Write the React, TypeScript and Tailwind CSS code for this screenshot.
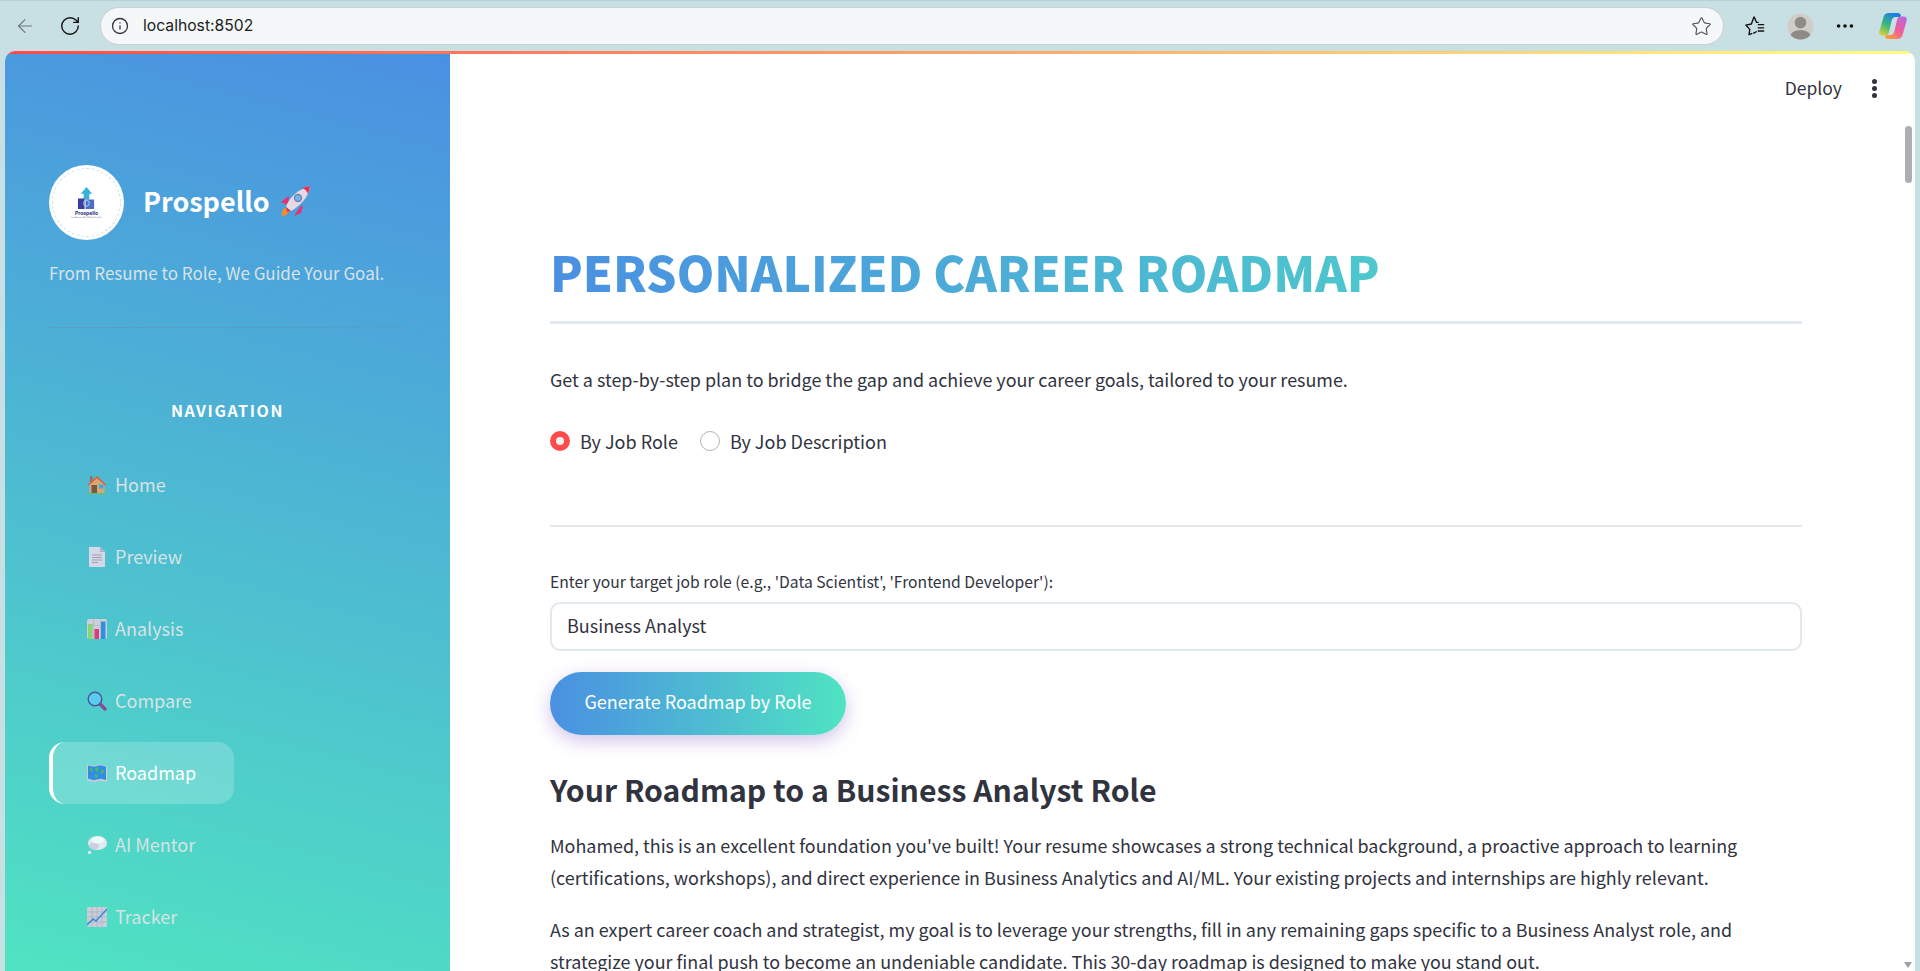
import { ArrowLeft, RotateCw, Info, Star, MoreHorizontal } from "lucide-react"

const sourceFont = "font-['Noto_Sans_CJK_SC','Noto_Sans',sans-serif]"

function Rocket() {
    return (
        <svg viewBox="0 0 32 32" className="w-8 h-8">
            <path d="M3 31c-1-4 1-8 4-8s4 2 3 4-4 4-7 4z" fill="#f78c2a" />
            <path d="M10 11L2 17l7 3zM21 22l-6 9 7-3 2-8z" fill="#ee2d6c" />
            <path d="M7 22C10 12 20 4 31 1c-1 11-10 20-19 25z" fill="#e6d8e4" />
            <path d="M23 3c3 1 5 3 6 6l2-8z" fill="#f0274f" />
            <circle cx="19" cy="13" r="4.200" fill="#7c7fb0" />
            <circle cx="19" cy="13" r="2.800" fill="#6fb6ef" />
            <path d="M7 22l5 4-4 1z" fill="#d9336a" />
        </svg>
    )
}

function HomeIcon() {
    return (
        <svg viewBox="0 0 20 20" className="w-5 h-5">
            <rect x="3" y="1" width="2.500" height="6" fill="#a0694a" />
            <path d="M2.500 8.500L10 2.500l7.500 6V18h-15z" fill="#e7a56c" />
            <path d="M0.500 10L10 1l9.500 9-1 .8L10 3.200 1.500 10.800z" fill="#e8552e" />
            <rect x="4.500" y="10" width="5.500" height="8" fill="#7a4f3a" />
            <rect x="12" y="9.500" width="4.500" height="4" fill="#3fa7e6" />
            <rect x="0.500" y="18" width="19" height="1.300" fill="#5fc46a" />
        </svg>
    )
}

function DocIcon() {
    return (
        <svg viewBox="0 0 20 20" className="w-5 h-5">
            <path d="M2 0h11l5 5v15H2z" fill="#e4dcea" />
            <path d="M13 0l5 5h-5z" fill="#b9afc6" />
            <path d="M5 8h10M5 10.500h10M5 13h10M5 15.500h6" stroke="#a79db5" strokeWidth="1" />
        </svg>
    )
}

function ChartIcon() {
    return (
        <svg viewBox="0 0 20 20" className="w-5 h-5">
            <rect width="20" height="20" rx="2" fill="#d9d3de" />
            <path d="M6.500 0v20M13.500 0v20M0 6.500h20" stroke="#bdb6c6" strokeWidth="0.800" />
            <rect x="1" y="5" width="4.500" height="15" fill="#8fd96a" />
            <rect x="7.500" y="10" width="4.500" height="10" fill="#ec2f72" />
            <rect x="14" y="2.500" width="4.500" height="17.500" fill="#2b8be0" />
        </svg>
    )
}

function SearchIcon() {
    return (
        <svg viewBox="0 0 20 20" className="w-5 h-5">
            <path d="M13 13l5 5" stroke="#8b3f88" strokeWidth="3.400" strokeLinecap="round" />
            <circle cx="8" cy="8" r="6.800" fill="#5dcdee" stroke="#4a4a9c" strokeWidth="1.400" />
        </svg>
    )
}

function MapIcon() {
    return (
        <svg viewBox="0 0 20 20" className="w-5 h-5">
            <path d="M0 1.500l6.500 1.500 7-1.500 6.500 1.500v16l-6.500-1.500-7 1.500L0 17z" fill="#d3c7dc" />
            <path d="M1 2.500l5.500 1.300 7-1.500L19 3.500v13.500l-5.500-1.300-7 1.500L1 15.500z" fill="#2f8fe3" />
            <path d="M3 5l3 1-1 3-2-1zM8 5l3-1 1 3-3 2zM14 6l3 1-1 4-2-1zM8 11l3 1-1 3-2-1z" fill="#4fb56a" />
        </svg>
    )
}

function ThoughtIcon() {
    return (
        <svg viewBox="0 0 20 20" className="w-5 h-5">
            <ellipse cx="10.500" cy="8" rx="9.500" ry="7" fill="#f1ecf5" />
            <ellipse cx="7" cy="11" rx="5" ry="3.500" fill="#d9d0e4" />
            <ellipse cx="11" cy="5" rx="6" ry="3.500" fill="#ffffff" />
            <circle cx="2.500" cy="17.500" r="1.700" fill="#f1ecf5" />
        </svg>
    )
}

function TrackerIcon() {
    return (
        <svg viewBox="0 0 20 20" className="w-5 h-5">
            <rect width="20" height="20" rx="1.500" fill="#d8cddd" />
            <path d="M5 0v20M10 0v20M15 0v20M0 5h20M0 10h20M0 15h20" stroke="#b8a9c0" strokeWidth="0.700" />
            <path d="M0 18l6-6 3 2 11-12" fill="none" stroke="#3b86d8" strokeWidth="1.600" />
        </svg>
    )
}

function StarList() {
    return (
        <svg viewBox="0 0 24 24" className="w-[22px] h-[22px]" fill="none" stroke="#111" strokeWidth="1.500">
            <path d="M11 2l2.600 6h2.400M9 20l-3.500 1.500.8-5.800L2 11l6-1.200L11 2M10 20l4-2" strokeLinejoin="round" />
            <path d="M15 10.500h7M15 14h7M15 17.500h7" />
        </svg>
    )
}

function Profile() {
    return (
        <svg viewBox="0 0 28 28" className="w-[27px] h-[27px]">
            <defs>
                <clipPath id="avatar"><circle cx="14" cy="14" r="13.500" /></clipPath>
            </defs>
            <circle cx="14" cy="14" r="13.500" fill="#cfcdca" />
            <g clipPath="url(#avatar)" fill="#8e8b87">
                <circle cx="14" cy="10" r="6" />
                <ellipse cx="14" cy="25" rx="11" ry="7.500" />
            </g>
        </svg>
    )
}

function Copilot() {
    return (
        <svg viewBox="0 0 28 28" className="w-7 h-7">
            <defs>
                <linearGradient id="copLeft" x1="0" y1="1" x2="0.600" y2="0">
                    <stop offset="0" stopColor="#f6d32d" />
                    <stop offset="0.500" stopColor="#39b97c" />
                    <stop offset="1" stopColor="#1c7fe0" />
                </linearGradient>
                <linearGradient id="copRight" x1="1" y1="0" x2="0.300" y2="1">
                    <stop offset="0" stopColor="#b469e8" />
                    <stop offset="0.600" stopColor="#f25c9a" />
                    <stop offset="1" stopColor="#f99a3f" />
                </linearGradient>
            </defs>
            <path d="M10 1h9c1.500 0 2.500 1 3 2.500l-1 1.500h-4c-3 0-4 2-4.500 4L10 20c-.5 2-2 3.500-4 3.500H3c-2 0-3.200-2-2.700-4L4.500 5C5.200 2.500 7 1 10 1z" fill="url(#copLeft)" />
            <path d="M18 27H9c-1.500 0-2.500-1-3-2.500l1-1.500h4c3 0 4-2 4.500-4L18 8c.5-2 2-3.500 4-3.500h3c2 0 3.200 2 2.700 4L23.500 23c-.7 2.500-2.500 4-5.500 4z" fill="url(#copRight)" />
        </svg>
    )
}

function LogoBadge() {
    return (
        <div className="w-[75px] h-[75px] rounded-full bg-white flex items-center justify-center shrink-0">
            <div className="w-[69px] h-[69px] rounded-full border border-dashed border-[#c4dff0] flex flex-col items-center justify-center">
                <svg viewBox="0 0 20 24" className="w-[19px] h-[23px]">
                    <path d="M10 0l6 7h-3v6H7V7H4z" fill="#37b3d8" />
                    <path d="M1 12h7v11H1z" fill="#3a3f9e" />
                    <path d="M9 13h9v10H9z" fill="#4c6fc4" />
                    <circle cx="10" cy="17" r="3" fill="none" stroke="#bcd6f0" strokeWidth="1" />
                </svg>
                <span className="text-[5px] leading-[7px] font-bold text-[#2a2f80] font-['Inter',sans-serif]">Prospello</span>
                <span className="text-[1.500px] leading-[2px] text-[#666] whitespace-nowrap font-['Inter',sans-serif]">From Resume to Role, We Guide Your Goal</span>
            </div>
        </div>
    )
}

const navItems = [
    { label: "Home", icon: HomeIcon },
    { label: "Preview", icon: DocIcon },
    { label: "Analysis", icon: ChartIcon },
    { label: "Compare", icon: SearchIcon },
    { label: "Roadmap", icon: MapIcon, active: true },
    { label: "AI Mentor", icon: ThoughtIcon },
    { label: "Tracker", icon: TrackerIcon },
]

function Sidebar() {
    return (
        <aside className="w-[445px] shrink-0 h-full overflow-hidden bg-[linear-gradient(195deg,#4a90e2_0%,#50e3c2_100%)] px-11 pt-[111px]">
            <div className="flex items-center h-[75px]">
                <LogoBadge />
                <span className="ml-[19px] pb-[4px] text-[27px] leading-none font-bold text-white">Prospello</span>
                <div className="ml-[9px] -mt-[3px]"><Rocket /></div>
            </div>
            <p className="mt-[19px] text-[17px] leading-[28px] text-[#d8e2e8] whitespace-nowrap">From Resume to Role, We Guide Your Goal.</p>
            <div className="mt-[40px] h-px bg-[#5b9fc0] w-[357px]" />
            <h3 className="mt-[70px] text-center text-[16px] leading-6 font-semibold tracking-[1.600px] text-white">NAVIGATION</h3>
            <nav className="mt-[32px] flex flex-col gap-[10px]">
                {navItems.map((item) => {
                    const Icon = item.icon
                    return (
                        <div
                            key={item.label}
                            className={
                                item.active
                                    ? "w-[185px] h-[62px] flex items-center gap-2 pl-[34px] rounded-2xl border-l-4 border-white bg-white/20 text-white text-[18px]"
                                    : "w-[185px] h-[62px] flex items-center gap-2 pl-[38px] text-[#d8e2e4] text-[18px]"
                            }
                        >
                            <span className={item.active ? "" : "opacity-90"}><Icon /></span>
                            <span className="pb-[2px]">{item.label}</span>
                        </div>
                    )
                })}
            </nav>
        </aside>
    )
}

function MainContent() {
    return (
        <main className="relative flex-1 h-full overflow-hidden bg-white pl-[100px] pr-[113px] text-[#31333f]">
            <header className="flex justify-end items-center h-[68px] -mr-[76px] gap-[30px]">
                <span className="text-[17.500px]">Deploy</span>
                <span className="flex flex-col gap-[2px] mr-[1px]">
                    <i className="block w-[5px] h-[5px] rounded-full bg-[#31333f]" />
                    <i className="block w-[5px] h-[5px] rounded-full bg-[#31333f]" />
                    <i className="block w-[5px] h-[5px] rounded-full bg-[#31333f]" />
                </span>
            </header>

            <h1 className="mt-[114px] pb-[15px] border-b-[3px] border-[#e2e8f0] text-[47.850px] leading-[70px] font-extrabold">
                <span className="block bg-[linear-gradient(90deg,#4a90e2,#50e3c2)] bg-clip-text text-transparent">PERSONALIZED CAREER ROADMAP</span>
            </h1>
            <p className="mt-[40px] text-[17.930px] leading-[30px]">Get a step-by-step plan to bridge the gap and achieve your career goals, tailored to your resume.</p>

            <div className="mt-[32px] flex items-center text-[18px] leading-[30px]">
                <span className="w-5 h-5 rounded-full border-[6px] border-[#ff4b4b] bg-[#f0f2f6]" />
                <span className="ml-[10px]">By Job Role</span>
                <span className="ml-[22px] w-5 h-5 rounded-full border border-[#b4b4b4] bg-white" />
                <span className="ml-[10px]">By Job Description</span>
            </div>

            <div className="mt-[69px] h-[2px] bg-[#e6e8ec]" />

            <label className="block mt-[43px] text-[15.680px] leading-[24px]">Enter your target job role (e.g., 'Data Scientist', 'Frontend Developer'):</label>
            <div className="mt-[8px] h-[49px] rounded-[10px] border-2 border-[#e2e8f0] bg-white flex items-center pl-[15px] pb-[2px] text-[18px]">Business Analyst</div>

            <button type="button" className="block mt-[21px] h-[63px] w-[296px] pb-[4px] rounded-full bg-[linear-gradient(90deg,#4a90e2,#50e3c2)] text-white text-[18px] shadow-[0_6px_18px_rgba(126,87,194,0.35)]">
                Generate Roadmap by Role
            </button>

            <h2 className="mt-[30px] text-[30.200px] leading-[48px] font-semibold">Your Roadmap to a Business Analyst Role</h2>

            <p className="mt-[16px] text-[17.930px] leading-[32px]">
                Mohamed, this is an excellent foundation you've built! Your resume showcases a strong technical background, a proactive approach to learning (certifications, workshops), and direct experience in Business Analytics and AI/ML. Your existing projects and internships are highly relevant.
            </p>
            <p className="mt-[20px] text-[17.930px] leading-[32px]">
                As an expert career coach and strategist, my goal is to leverage your strengths, fill in any remaining gaps specific to a Business Analyst role, and strategize your final push to become an undeniable candidate. This 30-day roadmap is designed to make you stand out.
            </p>

            {/* page scrollbar */}
            <div className="absolute right-[3px] top-[72px] w-[7px] h-[57px] rounded-full bg-[#aeaeb2]" />
            <div className="absolute right-[3px] bottom-[3px] w-0 h-0 border-x-[4px] border-x-transparent border-t-[6px] border-t-[#a0a0a4]" />
        </main>
    )
}

export default function App() {
    return (
        <div className={`h-screen overflow-hidden flex flex-col bg-[#c8dfe3] ${sourceFont}`}>
            <div className="h-[51px] shrink-0 flex items-center border-t border-[#b3d3d8] font-['Inter',sans-serif]">
                <ArrowLeft className="ml-[14px] w-[22px] h-[22px] text-[#6f7a7d]" strokeWidth={1.300} />
                <RotateCw className="ml-[23px] w-[22px] h-[22px] text-[#111]" strokeWidth={1.500} />
                <div className="ml-[19px] w-[1624px] h-[38px] rounded-full bg-[#f4f8f9] border border-[#c9d2d5] flex items-center pl-[10px] pr-[11px]">
                    <Info className="w-[18px] h-[18px] text-[#333]" strokeWidth={1.700} />
                    <span className="ml-[14px] text-[15.700px] text-[#1c1c1c]">localhost:8502</span>
                    <Star className="ml-auto w-[21px] h-[21px] text-[#555]" strokeWidth={1.300} />
                </div>
                <div className="ml-[20px]"><StarList /></div>
                <div className="ml-[21px]"><Profile /></div>
                <MoreHorizontal className="ml-[20px] w-[22px] h-[22px] text-[#111]" strokeWidth={2} />
                <div className="ml-[23px]"><Copilot /></div>
            </div>

            <div className="mx-[5px] flex-1 min-h-0 rounded-t-[10px] overflow-hidden flex flex-col">
                <div className="h-[3px] shrink-0 bg-[linear-gradient(90deg,#ff4b4b,#fffd80)]" />
                <div className="flex-1 min-h-0 flex">
                    <Sidebar />
                    <MainContent />
                </div>
            </div>
        </div>
    )
}
